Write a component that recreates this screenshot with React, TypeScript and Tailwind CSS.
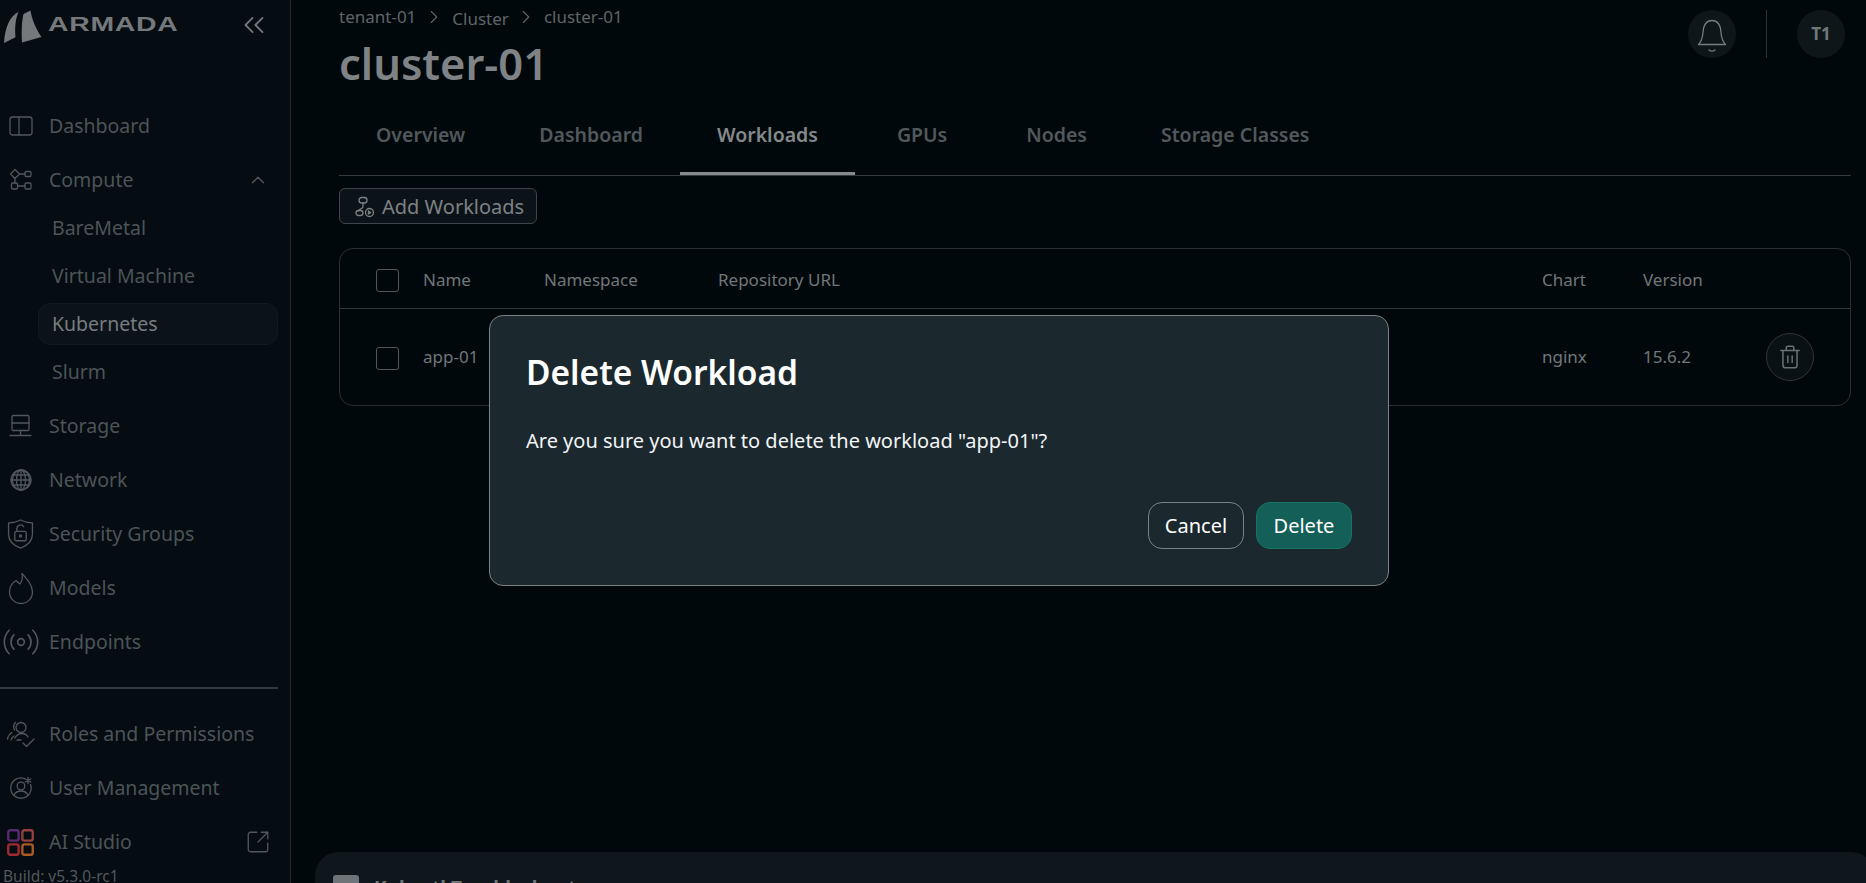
import React from "react";
import { ChevronsLeft, ChevronUp, ChevronRight, Radio, SquareArrowOutUpRight } from "lucide-react";

const s = { fill: "none", stroke: "currentColor", strokeWidth: 1.3, strokeLinecap: "round" as const, strokeLinejoin: "round" as const };

const DashIcon = () => (
  <svg width="24" height="24" viewBox="0 0 24 24" {...s}>
    <rect x="1" y="3" width="22" height="18" rx="2.5" />
    <path d="M10 3v18" />
  </svg>
);
const ComputeIcon = () => (
  <svg width="24" height="24" viewBox="0 0 24 24" {...s}>
    <path d="M6 1.5l4.5 4.5L6 10.5 1.5 6z" />
    <rect x="16" y="3.5" width="6" height="5" rx="1.2" />
    <rect x="2.5" y="15" width="6" height="6" rx="1.2" />
    <rect x="16" y="15" width="6" height="6" rx="1.2" />
    <path d="M10.5 6H16M8.5 18H16M6 10.5V15" />
  </svg>
);
const StorageIcon = () => (
  <svg width="24" height="24" viewBox="0 0 24 24" {...s}>
    <rect x="3" y="1.5" width="17" height="15" rx="1.2" />
    <path d="M3 9h17M11.5 16.5V21M1 21.5h21" />
  </svg>
);
const GlobeIcon = () => (
  <svg width="24" height="24" viewBox="0 0 24 24" {...s}>
    <circle cx="12" cy="12" r="10" />
    <ellipse cx="12" cy="12" rx="4.5" ry="10" />
    <ellipse cx="12" cy="12" rx="8.5" ry="10" />
    <path d="M12 2v20M2 12h20M3.5 7h17M3.5 17h17" />
  </svg>
);
const ShieldIcon = () => (
  <svg width="27" height="32" viewBox="0 0 26 30" {...s}>
    <path d="M13 1.5c3 1.600 7.500 2.600 11.500 2.800v11c0 6.500-4.500 10.700-11.500 13.200C6 26 1.500 21.800 1.500 15.300v-11C5.500 4.100 10 3.100 13 1.500z" />
    <rect x="7.500" y="12.500" width="11" height="9" rx="1.500" />
    <path d="M9.500 12.500V9.500a3.500 3.500 0 0 1 6.500-1.500" />
    <circle cx="13" cy="17" r="1" />
  </svg>
);
const FlameIcon = () => (
  <svg width="26" height="32" viewBox="0 0 26 32" {...s}>
    <path d="M14 1.500c1 5 0 7-2 10.500-1.500-1-3-2.500-4-3.500C4 11 1.500 15 1.500 20a11.500 11.500 0 0 0 23 0C24.500 13 19 7 14 1.500z" />
  </svg>
);
const RolesIcon = () => (
  <svg width="30" height="28" viewBox="0 0 30 28" {...s}>
    <circle cx="15" cy="7.500" r="5" />
    <path d="M9.500 2.500C7.500 4 7 7.500 8.500 10M6 12.500C3.500 14 2 16.500 1.500 19M8 16c-1.500 1-2.500 2.500-3 4M9 18c1.500-3 4-4.500 7-4.500 3 0 5 1.500 6 3.500M11 20l4 0M17 23l3.500 3.500L28 19" />
  </svg>
);
const UserIcon = () => (
  <svg width="24" height="24" viewBox="0 0 24 24" {...s}>
    <path d="M15.500 2.500A10.200 10.200 0 1 0 21.500 8.500" />
    <circle cx="12" cy="10" r="3.800" />
    <path d="M5 19c1.500-3 4-4 7-4s5.500 1 7 4" />
    <path d="M19 1.500v6M16.200 3l5.600 3M21.800 3l-5.600 3" />
  </svg>
);
const StudioIcon = () => (
  <svg width="27" height="27" viewBox="0 0 26 26" fill="none" strokeWidth="2.3">
    <rect x="1.200" y="1.200" width="10" height="10" rx="2" stroke="#5a2a6e" />
    <rect x="14.800" y="1.200" width="10" height="10" rx="2" stroke="#93403f" />
    <rect x="1.200" y="14.800" width="10" height="10" rx="2" stroke="#a02a30" />
    <rect x="14.800" y="14.800" width="10" height="10" rx="2" stroke="#ab5a24" />
  </svg>
);
const WorkloadIcon = () => (
  <svg width="20" height="22" viewBox="0 0 20 22" {...s}>
    <rect x="4" y="1.500" width="8" height="5.500" rx="2.700" />
    <path d="M8 7v3.500c0 1-.5 1.500-1.500 2s-3 1-3 2.500" />
    <rect x="1" y="14.500" width="7" height="5" rx="2.500" />
    <circle cx="14.500" cy="16.500" r="4" />
    <path d="M13.500 15v3l2.300-1.500z" />
  </svg>
);
const TrashIcon = () => (
  <svg width="26" height="26" viewBox="0 0 24 24" fill="none" stroke="currentColor" strokeWidth="1.4" strokeLinecap="round" strokeLinejoin="round">
    <path d="M3.500 6h17M8.500 6V3.500c0-.8.600-1.500 1.500-1.500h4c.9 0 1.500.7 1.500 1.500V6M5.500 6v13.500c0 1.400 1.100 2.500 2.500 2.500h8c1.400 0 2.500-1.100 2.500-2.500V6" />
    <path d="M10 11v6M14 11v6" />
  </svg>
);
const BellIcon = () => (
  <svg width="32" height="36" viewBox="0 0 32 36" {...s}>
    <path d="M2.500 25.500h27c-3-3-4-6-4.500-12C24.500 5 21 1.500 16 1.500S7.500 5 7 13.500C6.500 19.500 5.500 22.500 2.500 25.500z" />
    <path d="M13 31c1.500 1.500 4.500 1.500 6 0" />
  </svg>
);
const Logo = () => (
  <svg width="44" height="44" viewBox="0 0 44 44" fill="#75797c">
    <path d="M18.500 10C10 14 5 25 4 41l11.500-5.800C14.500 26 15.500 17 18.500 10z" />
    <path d="M30.500 8.500L23.500 12C21.500 20 21.500 31 22 40.500l19.500-5.500C36 27 32 18 30.500 8.500z" />
  </svg>
);

function NavItem({ icon, label, right }: { icon: React.ReactNode; label: string; right?: React.ReactNode }) {
  return (
    <div className="flex h-[54px] shrink-0 items-center text-[19.500px] text-[#4c5458]">
      <span className="flex w-[49px] shrink-0 items-center justify-center pr-[8px] text-[#51585c]">{icon}</span>
      <span className="flex-1 whitespace-nowrap">{label}</span>
      {right}
    </div>
  );
}

function SubItem({ label, active }: { label: string; active?: boolean }) {
  return (
    <div
      className={`my-[3px] ml-[38px] flex h-[42px] items-center rounded-[12px] border pl-[13px] text-[19.500px] ${
        active ? "border-[#131a1f] bg-[#0c1318] text-[#767d81]" : "border-transparent text-[#4c5458]"
      }`}
    >
      {label}
    </div>
  );
}

function Sidebar() {
  return (
    <aside className="flex h-[883px] w-[291px] shrink-0 flex-col overflow-hidden border-r border-r-[#1e282d] bg-[#050c12] pr-[12px]">
      <div className="relative flex h-[99px] shrink-0 items-start">
        <div className="flex items-center pt-[2px]">
          <Logo />
          <span className="ml-[4px] origin-left scale-x-[1.42] font-['Liberation_Sans',sans-serif] text-[20px] font-bold leading-none tracking-[0.5px] text-[#75797c]">
            ARMADA
          </span>
        </div>
        <ChevronsLeft className="absolute right-[7px] top-[8px] text-[#71777b]" size={34} strokeWidth={1.3} />
      </div>
      <NavItem icon={<DashIcon />} label="Dashboard" />
      <NavItem
        icon={<ComputeIcon />}
        label="Compute"
        right={<ChevronUp className="mr-[9px] text-[#51585c]" size={22} strokeWidth={1.5} />}
      />
      <div className="-mt-[3px] mb-[3px] flex shrink-0 flex-col">
        <SubItem label="BareMetal" />
        <SubItem label="Virtual Machine" />
        <SubItem label="Kubernetes" active />
        <SubItem label="Slurm" />
      </div>
      <NavItem icon={<StorageIcon />} label="Storage" />
      <NavItem icon={<GlobeIcon />} label="Network" />
      <NavItem icon={<ShieldIcon />} label="Security Groups" />
      <NavItem icon={<FlameIcon />} label="Models" />
      <NavItem icon={<Radio size={40} strokeWidth={1} />} label="Endpoints" />
      <div className="my-[18px] h-[2px] shrink-0 bg-[#30393e]" />
      <NavItem icon={<RolesIcon />} label="Roles and Permissions" />
      <NavItem icon={<UserIcon />} label="User Management" />
      <NavItem
        icon={<StudioIcon />}
        label="AI Studio"
        right={<SquareArrowOutUpRight className="mr-[7px] text-[#51585c]" size={26} strokeWidth={1.2} />}
      />
      <div className="-mt-[1px] pl-[3px] text-[15.500px] leading-[16px] text-[#51585c]">Build: v5.3.0-rc1</div>
    </aside>
  );
}

function Tab({ label, active, wide }: { label: string; active?: boolean; wide?: boolean }) {
  return (
    <div
      className={`h-[53px] border-b-[3px] px-[37px] text-[19.500px] font-semibold leading-[26px] ${
        active ? "border-b-[#85898b] text-[#85898b]" : "border-b-transparent text-[#51585c]"
      } ${wide ? "mx-[5px]" : ""}`}
    >
      {label}
    </div>
  );
}

function Checkbox({ className }: { className?: string }) {
  return <div className={`h-[23px] w-[23px] rounded-[3px] border border-[#50585c] ${className ?? ""}`} />;
}

const cols = "grid grid-cols-[47px_121px_174px_824px_101px_123px_1fr] items-center";

function Main() {
  return (
    <main className="relative flex h-[883px] flex-1 flex-col overflow-hidden pl-[48px] pr-[15px]">
      <div className="flex h-[122px] shrink-0 items-start justify-between">
        <div>
          <div className="flex h-[34px] items-center text-[17px] text-[#5f6568]">
            <span>tenant-01</span>
            <ChevronRight className="mx-[7px]" size={22} strokeWidth={1.2} />
            <span className="pt-[3px]">Cluster</span>
            <ChevronRight className="mx-[6.500px]" size={22} strokeWidth={1.2} />
            <span>cluster-01</span>
          </div>
          <h1 className="mt-[3px] text-[43.500px] font-semibold leading-[52px] text-[#7f8385]">cluster-01</h1>
        </div>
        <div className="mt-[10px] flex items-center">
          <div className="flex h-[48px] w-[48px] items-center justify-center rounded-full bg-[#0f161a] pt-[6px] text-[#747a7d]">
            <BellIcon />
          </div>
          <div className="mx-[30px] h-[48px] w-px bg-[#2a3337]" />
          <div className="mr-[6px] flex h-[48px] w-[48px] items-center justify-center rounded-full bg-[#0f161a] text-[17px] font-bold text-[#72777a]">
            T1
          </div>
        </div>
      </div>
      <div className="flex h-[54px] shrink-0 border-b border-b-[#333c40]">
        <Tab label="Overview" />
        <Tab label="Dashboard" />
        <Tab label="Workloads" active />
        <Tab label="GPUs" wide />
        <Tab label="Nodes" />
        <Tab label="Storage Classes" />
      </div>
      <div className="mt-[12px] flex">
        <div className="flex h-[36px] w-[198px] items-center gap-[7px] rounded-[6px] border border-[#3d464a] bg-[#0c1318] pl-[15px] pt-[2px] text-[20px] text-[#7d8285]">
          <WorkloadIcon />
          <span>Add Workloads</span>
        </div>
      </div>
      <div className="mt-[24px] rounded-[14px] border border-[#283136] text-[17px] text-[#71777a]">
        <div className={`${cols} h-[60px] border-b border-b-[#30393d] pl-[36px] pt-[2px]`}>
          <Checkbox className="mt-[2px]" />
          <span>Name</span>
          <span>Namespace</span>
          <span>Repository URL</span>
          <span>Chart</span>
          <span>Version</span>
          <span />
        </div>
        <div className={`${cols} h-[96px] pl-[36px]`}>
          <Checkbox className="mt-[2px]" />
          <span>app-01</span>
          <span />
          <span />
          <span>nginx</span>
          <span>15.6.2</span>
          <div className="flex h-[48px] w-[48px] items-center justify-center rounded-full border border-[#2c3539] bg-[#0a1115] text-[#6a7074]">
            <TrashIcon />
          </div>
        </div>
      </div>
      <div className="absolute left-[24px] top-[852px] h-[80px] w-[1560px] rounded-t-[24px] bg-[#10171c] pl-[18px] pt-[22px]">
        <div className="flex items-center gap-[15px] text-[#6e7477]">
          <div className="h-[26px] w-[26px] rounded-[3px] bg-[#6e7477]" />
          <span className="text-[19px] font-bold">Kubectl Troubleshoot</span>
        </div>
      </div>
    </main>
  );
}

function Modal() {
  return (
    <div className="absolute left-[489px] top-[315px] flex h-[271px] w-[900px] flex-col rounded-[14px] border border-[#7b8285] bg-[#1b282e] px-[36px] pb-[36px] text-white">
      <h2 className="mt-[31px] text-[33.500px] font-semibold leading-[50px]">Delete Workload</h2>
      <p className="mt-[30px] text-[20px] leading-[28px] text-[#f2f5f6]">Are you sure you want to delete the workload "app-01"?</p>
      <div className="mt-auto flex justify-end gap-[12px]">
        <button className="h-[47px] w-[96px] rounded-[14px] border border-[#7b8285] text-[20px]">Cancel</button>
        <button className="h-[47px] w-[96px] rounded-[14px] border border-[#187266] bg-[#145f58] text-[20px]">Delete</button>
      </div>
    </div>
  );
}

export default function App() {
  return (
    <div className="relative flex h-[883px] w-full overflow-hidden bg-[#01080b] font-['Noto_Sans',sans-serif]">
      <Sidebar />
      <Main />
      <Modal />
    </div>
  );
}
